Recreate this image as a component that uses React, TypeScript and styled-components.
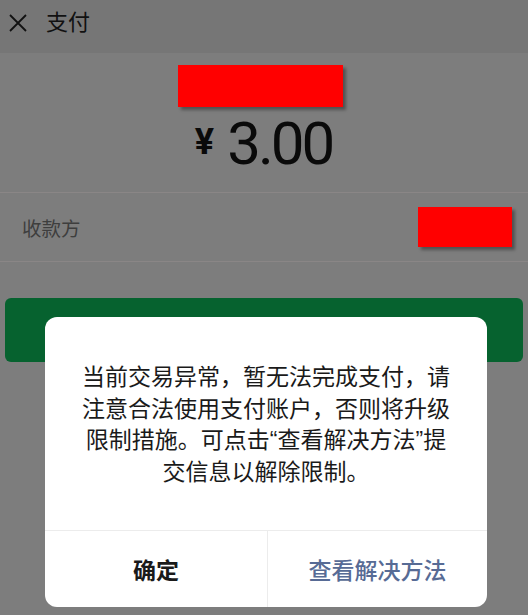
import styled, { createGlobalStyle } from 'styled-components';

const GlobalStyle = createGlobalStyle`
  html, body {
    margin: 0;
    padding: 0;
    background: #7d7d7d;
  }
  body {
    font-family: "Liberation Sans", "Noto Sans CJK SC", sans-serif;
  }
`;

const Page = styled.div`
  position: relative;
  width: 528px;
  height: 615px;
  overflow: hidden;
  background: #7d7d7d;
`;

const Header = styled.div`
  display: flex;
  align-items: center;
  height: 53px;
  padding: 0 0 8px 8px;
  background: #767676;
  box-sizing: border-box;
`;

const Title = styled.div`
  margin-left: 18px;
  font-size: 22px;
  color: #111;
  line-height: 1;
`;

const AmountSection = styled.div`
  display: flex;
  flex-direction: column;
  align-items: center;
  height: 139px;
  padding: 12px 8px 0 0;
  box-sizing: border-box;
`;

const Redacted = styled.div<{ $w: number; $h: number }>`
  width: ${(p) => p.$w}px;
  height: ${(p) => p.$h}px;
  background: #ff0000;
  box-shadow: 3px 3px 3px rgba(0, 0, 0, 0.35);
`;

const Amount = styled.div`
  display: flex;
  align-items: center;
  margin-top: 4px;
  margin-left: 7px;
  color: #0a0a0a;
  font-family: Roboto, "Liberation Sans", sans-serif;
`;

const Currency = styled.span`
  font-size: 36px;
  font-weight: 700;
  margin-right: 13px;
  margin-top: -4px;
`;

const Value = styled.span`
  font-size: 60px;
  font-weight: 400;
  letter-spacing: -3px;
  line-height: 1.1;
`;

const PayeeRow = styled.div`
  display: flex;
  align-items: center;
  justify-content: space-between;
  height: 70px;
  padding: 0 16px 0 22px;
  border-top: 1px solid #8a8686;
  border-bottom: 1px solid #8a8686;
  box-sizing: border-box;
`;

const Label = styled.span`
  font-size: 19.5px;
  color: #3e3e3e;
`;

const PayButton = styled.div`
  height: 64px;
  margin: 36px 5px 0;
  border-radius: 6px;
  background: #06622f;
`;

const Dialog = styled.div`
  position: absolute;
  top: 317px;
  left: 45px;
  width: 442px;
  background: #fff;
  border-radius: 12px;
  overflow: hidden;
`;

const Message = styled.div`
  padding: 45px 35px 42px;
  font-size: 23px;
  line-height: 31.5px;
  color: #1a1a1a;
  text-align: center;
`;

const Actions = styled.div`
  display: grid;
  grid-template-columns: 222px 1fr;
  height: 76px;
  border-top: 1px solid #ececec;
`;

const ActionButton = styled.div<{ $link?: boolean }>`
  display: flex;
  align-items: center;
  justify-content: center;
  font-size: 23px;
  font-weight: ${(p) => (p.$link ? 500 : 700)};
  color: ${(p) => (p.$link ? '#576b95' : '#1a1a1a')};
  border-left: ${(p) => (p.$link ? '1px solid #ececec' : 'none')};
`;

const CloseIcon = () => (
  <svg width="20" height="20" viewBox="0 0 20 20">
    <path d="M2 2 L18 18 M18 2 L2 18" stroke="#111" strokeWidth="1.8" fill="none" />
  </svg>
);

export default function App() {
  return (
    <>
      <GlobalStyle />
      <Page>
        <Header>
          <CloseIcon />
          <Title>支付</Title>
        </Header>
        <AmountSection>
          <Redacted $w={165} $h={42} />
          <Amount>
            <Currency>¥</Currency>
            <Value>3.00</Value>
          </Amount>
        </AmountSection>
        <PayeeRow>
          <Label>收款方</Label>
          <Redacted $w={94} $h={40} />
        </PayeeRow>
        <PayButton />
        <Dialog>
          <Message>
            当前交易异常，暂无法完成支付，请注意合法使用支付账户，否则将升级限制措施。可点击“查看解决方法”提交信息以解除限制。
          </Message>
          <Actions>
            <ActionButton>确定</ActionButton>
            <ActionButton $link>查看解决方法</ActionButton>
          </Actions>
        </Dialog>
      </Page>
    </>
  );
}
